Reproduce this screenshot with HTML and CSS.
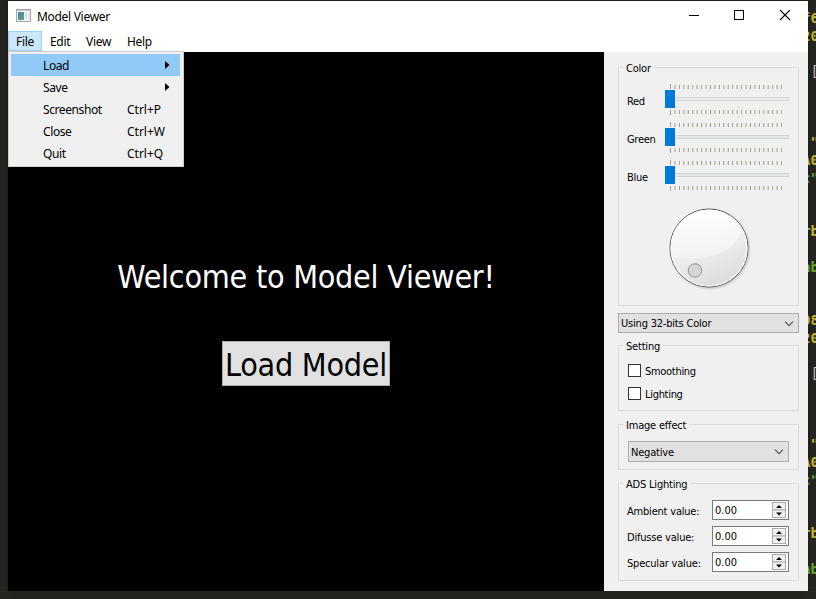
FILE: index.html
```html
<!DOCTYPE html>
<html lang="en">
<head>
<meta charset="utf-8">
<title>Model Viewer</title>
<link rel="stylesheet" href="styles.css">
</head>
<body>
<div class="desktop">
  <div class="window">
    <header class="titlebar">
      <svg class="app-icon" width="16" height="14" viewBox="0 0 16 14"><defs><linearGradient id="ig" x1="0" y1="0" x2="1" y2="1"><stop offset="0" stop-color="#4d83b5"/><stop offset="1" stop-color="#57a878"/></linearGradient></defs><rect x=".5" y=".5" width="14" height="12" fill="#f4f4f4" stroke="#9fa5aa"/><path d="M1 1.5h13" stroke="#c4cbd0"/><rect x="2" y="3" width="6" height="8" fill="url(#ig)"/><rect x="9" y="3" width="2" height="8" fill="#dce2e4"/><rect x="12" y="3" width="2" height="8" fill="#e4e7e9"/></svg>
      <span class="title">Model Viewer</span>
      <div class="controls">
        <svg width="46" height="30" viewBox="0 0 46 30"><path d="M19 14.5h10" stroke="#000"/></svg>
        <svg width="46" height="30" viewBox="0 0 46 30"><rect x="18.500" y="9.500" width="9" height="9" fill="none" stroke="#000"/></svg>
        <svg width="46" height="30" viewBox="0 0 46 30"><path d="M18 9l10 10M28 9l-10 10" stroke="#000" stroke-width="1.1"/></svg>
      </div>
    </header>
    <nav class="menubar">
      <span class="menu-item open">File</span><span class="menu-item">Edit</span><span class="menu-item">View</span><span class="menu-item">Help</span>
      <div class="dropdown">
        <div class="entry active"><span>Load</span><svg width="5" height="8"><path d="M0 0l4.5 4L0 8z"/></svg></div>
        <div class="entry"><span>Save</span><svg width="5" height="8"><path d="M0 0l4.5 4L0 8z"/></svg></div>
        <div class="entry"><span>Screenshot</span><span>Ctrl+P</span></div>
        <div class="entry"><span>Close</span><span>Ctrl+W</span></div>
        <div class="entry"><span>Quit</span><span>Ctrl+Q</span></div>
      </div>
    </nav>
    <main class="content">
      <section class="canvas">
        <h1 class="welcome">Welcome to Model Viewer!</h1>
        <button class="load">Load Model</button>
      </section>
      <aside class="panel">
        <section class="group color">
          <h2>Color</h2>
          <div class="slider-row"><label>Red</label><svg class="slider" width="124" height="32"><use href="#slider"/></svg></div>
          <div class="slider-row"><label>Green</label><svg class="slider" width="124" height="32"><use href="#slider"/></svg></div>
          <div class="slider-row"><label>Blue</label><svg class="slider" width="124" height="32"><use href="#slider"/></svg></div>
          <svg class="dial" width="86" height="86" viewBox="0 0 86 86">
            <defs>
              <linearGradient id="dg" x1=".3" y1="0" x2=".7" y2="1"><stop offset="0" stop-color="#f6f6f6"/><stop offset=".55" stop-color="#ececec"/><stop offset="1" stop-color="#dadada"/></linearGradient>
              <linearGradient id="hl" x1=".4" y1="0" x2=".6" y2="1"><stop offset="0" stop-color="#fff"/><stop offset="1" stop-color="#f1f1f1"/></linearGradient>
              <radialGradient id="sh"><stop offset=".88" stop-color="#777" stop-opacity=".55"/><stop offset="1" stop-color="#999" stop-opacity="0"/></radialGradient>
              <clipPath id="dc"><circle cx="43" cy="43" r="38"/></clipPath>
            </defs>
            <circle cx="44" cy="44" r="41.500" fill="url(#sh)"/>
            <circle cx="43" cy="43" r="39" fill="url(#dg)" stroke="#505050"/>
            <path clip-path="url(#dc)" d="M0 0h86v18Q76 25 73 32C64 50 38 56 5 53z" fill="url(#hl)"/>
            <circle cx="43" cy="43" r="38" fill="none" stroke="#fff" stroke-width="1.2"/>
            <circle cx="29" cy="65.500" r="6.700" fill="#d6d6d6" stroke="#929292"/>
          </svg>
        </section>
        <div class="combo depth"><span>Using 32-bits Color</span><svg width="10" height="6"><path d="M1 .7l4 4 4-4" fill="none" stroke="#555" stroke-width="1.2"/></svg></div>
        <section class="group setting">
          <h2>Setting</h2>
          <label class="check"><i></i><span>Smoothing</span></label>
          <label class="check"><i></i><span>Lighting</span></label>
        </section>
        <section class="group effect">
          <h2>Image effect</h2>
          <div class="combo"><span>Negative</span><svg width="10" height="6"><path d="M1 .7l4 4 4-4" fill="none" stroke="#555" stroke-width="1.2"/></svg></div>
        </section>
        <section class="group ads">
          <h2>ADS Lighting</h2>
          <div class="spin-row"><label>Ambient value:</label><div class="spin"><span>0.00</span><svg width="15" height="18"><use href="#spin"/></svg></div></div>
          <div class="spin-row"><label>Difusse value:</label><div class="spin"><span>0.00</span><svg width="15" height="18"><use href="#spin"/></svg></div></div>
          <div class="spin-row"><label>Specular value:</label><div class="spin"><span>0.00</span><svg width="15" height="18"><use href="#spin"/></svg></div></div>
        </section>
      </aside>
    </main>
  </div>
  <pre class="code"><b>f6</b>
<b>20</b>

 <s>[</s>



 <b>"</b>
<b>A0</b>
<i>c"</i>


<b>rb</b>

<i>ab</i>


<b>08</b>
<b>20</b>

 <s>[</s>



 <b>"</b>
<b>A0</b>
<i>c"</i>


<b>rb</b>

<i>ab</i></pre>
</div>
<svg class="defs" width="0" height="0">
  <defs>
    <g id="slider">
      <path d="M5.500 0v5M5.500 26v5" stroke="#a09f8e"/>
      <path d="M9.500 3h107.500M9.500 28h107.500" stroke="#a09f8e" stroke-width="4" stroke-dasharray="1 3.440"/>
      <rect x=".5" y="13.500" width="123" height="3" fill="#e7eaea" stroke="#d6d6d6"/>
      <rect y="6" width="10" height="18" fill="#007ad9"/>
    </g>
    <g id="spin">
      <rect x=".5" y=".5" width="13" height="7.500" fill="#f0f0f0" stroke="#acacac"/>
      <rect x=".5" y="8" width="13" height="7.500" fill="#f0f0f0" stroke="#acacac"/>
      <path d="M4 6l3-3 3 3zM4 10.500h6l-3 3z"/>
    </g>
  </defs>
</svg>
</body>
</html>
```
FILE: styles.css
```css
* { box-sizing: border-box; }
body { margin: 0; background: #272623; overflow: hidden; }
svg { display: block; flex: none; }
.defs { position: absolute; }
.desktop {
  display: grid;
  grid-template-columns: 800px 8px;
  padding: 1px 0 0 8px;
  height: 599px;
  background: linear-gradient(#272623 591px, #333 591px, #252522 592px);
}
.window { height: 590px; display: flex; flex-direction: column; background: #f0f0f0; box-shadow: 0 0 8px #1a1a18; }

.titlebar { height: 30px; display: flex; align-items: center; padding-left: 8px; background: #fff; font: 12px "Noto Sans", sans-serif; }
.app-icon { margin-right: 5px; }
.title { letter-spacing: -.3px; }
.controls { display: flex; margin-left: auto; }

.menubar { position: relative; z-index: 1; height: 21px; display: flex; background: #fff; font: 12px/22px "Noto Sans", sans-serif; letter-spacing: -.3px; color: #000; }
.menu-item { padding: 0 8px; height: 20px; }
.menu-item.open { background: #cce8ff; box-shadow: inset 0 0 0 1px #99d1ff; width: 34px; }
.menu-item:nth-child(2) { width: 36px; }
.menu-item:nth-child(3) { width: 41px; }
.dropdown { position: absolute; left: 0; top: 20px; width: 176px; height: 116px; padding: 2px; border: 1px solid #ccc; background: #f0f0f0; }
.entry { display: grid; grid-template-columns: 84px 1fr; height: 22px; width: 169px; padding-left: 32px; line-height: 23px; letter-spacing: -.4px; }
.entry span + span { letter-spacing: 0; }
.entry svg { margin: 7px 0 0 38px; }
.active { background: #91c9f7; }

.content { flex: 1; display: flex; font: 11px "DejaVu Sans Condensed", "DejaVu Sans", sans-serif; font-stretch: condensed; color: #000; }
.canvas { width: 596px; background: #000; display: flex; flex-direction: column; align-items: center; padding-top: 205px; font: 32px/40px "DejaVu Sans Condensed", "DejaVu Sans", sans-serif; font-stretch: condensed; }
.welcome { margin: 0; font: inherit; color: #fff; letter-spacing: -.26px; white-space: nowrap; }
.load { width: 168px; height: 45px; margin-top: 44px; padding: 2px 0 0; border: 1px solid #adadad; background: #e1e1e1; color: #000; font: inherit; letter-spacing: -.26px; white-space: nowrap; }

.panel { width: 204px; padding: 15px 9px 0 14px; display: flex; flex-direction: column; }
.group { border: 1px solid #dcdcdc; width: 181px; padding: 0 9px; }
.group h2 { margin: -7px 0 0 -5px; width: max-content; padding: 1px 3px 0 3px; background: #f0f0f0; font: inherit; line-height: 14px; letter-spacing: -.2px; }
.color { height: 239px; }
.slider-row { display: flex; justify-content: space-between; height: 38px; letter-spacing: -.3px; }
.slider-row label { padding-top: 11px; margin-left: -1px; }
.color h2 { margin-bottom: 8px; }
.dial { margin: 7px 0 0 38px; }
.combo { display: flex; align-items: center; justify-content: space-between; height: 21px; padding: 1px 4px 0 2px; border: 1px solid #adadad; background: #e1e1e1; letter-spacing: -.2px; }
.depth { margin: 7px 0 12px; width: 181px; height: 20px; }
.setting { height: 66px; }
.check { display: flex; align-items: center; height: 13px; margin: 10px 0 0; gap: 4px; letter-spacing: -.3px; }
.check span { padding-top: 1px; }
.check i { width: 13px; height: 13px; border: 1px solid #333; background: #fff; }
.effect { height: 46px; margin-top: 13px; }
.effect .combo { margin-top: 8px; }
.ads { height: 98px; margin-top: 13px; }
.ads h2 { margin-bottom: 8px; }
.spin-row { display: flex; align-items: center; justify-content: space-between; height: 20px; margin-bottom: 6px; letter-spacing: -.2px; white-space: nowrap; }
.spin-row label { margin-left: -1px; padding-top: 2px; }
.spin { display: flex; align-items: center; width: 77px; height: 20px; padding-left: 2px; border: 1px solid #7a7a7a; background: #fff; letter-spacing: 0; }
.spin span { padding-top: 1px; }
.spin svg { margin: 2px 1px 0 auto; }

.code { margin: 9px 0 0 -7px; padding: 0 0 0 1px; width: 15px; overflow: hidden; font: 14px/17.77px "DejaVu Sans Mono", monospace; clip-path: inset(0 0 0 7px); color: #bbb; }
.code b { font-weight: bold; color: #c2b52d; }
.code i { font-style: normal; font-weight: bold; color: #65a52c; }
.code s { text-decoration: none; }
```
